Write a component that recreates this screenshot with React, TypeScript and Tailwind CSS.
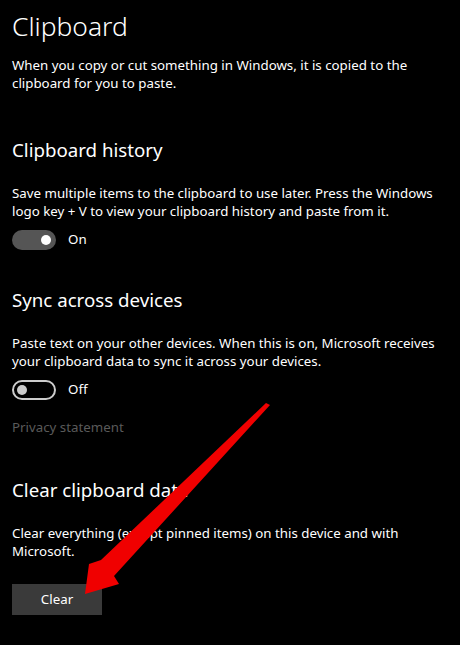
import React from 'react';

const Toggle = ({ on }: { on: boolean }) =>
  on ? (
    <div className="flex h-[20px] w-[44px] items-center justify-end rounded-full bg-[#555555] pr-[5px]">
      <div className="h-[10px] w-[10px] rounded-full bg-white" />
    </div>
  ) : (
    <div className="flex h-[20px] w-[44px] items-center rounded-full border-2 border-[#cccccc] pl-[3px]">
      <div className="h-[10px] w-[10px] rounded-full bg-[#cccccc]" />
    </div>
  );

export default function App() {
  return (
    <div
      className="relative h-[645px] w-[460px] overflow-hidden bg-black pl-[12px] text-white"
      style={{ fontFamily: '"Segoe UI", "Noto Sans", sans-serif' }}
    >
      {/* Page title */}
      <h1 className="h-[52px] text-[26.4px] font-light leading-[52px]">Clipboard</h1>
      <p className="mt-[4px] text-[13.3px] leading-[18px]">
        When you copy or cut something in Windows, it is copied to the
        <br />
        clipboard for you to paste.
      </p>

      {/* Clipboard history */}
      <h2 className="mt-[44px] text-[18.7px] leading-[28px]">Clipboard history</h2>
      <p className="mt-[20px] text-[13.3px] leading-[18px]">
        Save multiple items to the clipboard to use later. Press the Windows
        <br />
        logo key + V to view your clipboard history and paste from it.
      </p>
      <div className="mt-[10px] flex h-[20px] items-center gap-[12px]">
        <Toggle on />
        <span className="text-[13.3px]">On</span>
      </div>

      {/* Sync across devices */}
      <h2 className="mt-[36px] text-[18.7px] leading-[28px]">Sync across devices</h2>
      <p className="mt-[20px] text-[13.3px] leading-[18px]">
        Paste text on your other devices. When this is on, Microsoft receives
        <br />
        your clipboard data to sync it across your devices.
      </p>
      <div className="mt-[10px] flex h-[20px] items-center gap-[12px]">
        <Toggle on={false} />
        <span className="text-[13.3px]">Off</span>
      </div>
      <div className="mt-[18px] text-[13.3px] leading-[18px] text-[#5a5a5a]">Privacy statement</div>

      {/* Clear clipboard data */}
      <h2 className="mt-[40px] text-[18.7px] leading-[28px]">Clear clipboard data</h2>
      <p className="mt-[20px] text-[13.3px] leading-[18px]">
        Clear everything (except pinned items) on this device and with
        <br />
        Microsoft.
      </p>
      <button className="mt-[24px] h-[31px] w-[90px] bg-[#3a3a3a] text-[13.3px] text-white">Clear</button>

      {/* Red annotation arrow */}
      <svg className="pointer-events-none absolute left-0 top-0" width="460" height="645" viewBox="0 0 460 645">
        <polygon
          points="270,405 114,576 119,584 85,594 89,564 101,560 266,403"
          fill="#f00000"
        />
      </svg>
    </div>
  );
}
